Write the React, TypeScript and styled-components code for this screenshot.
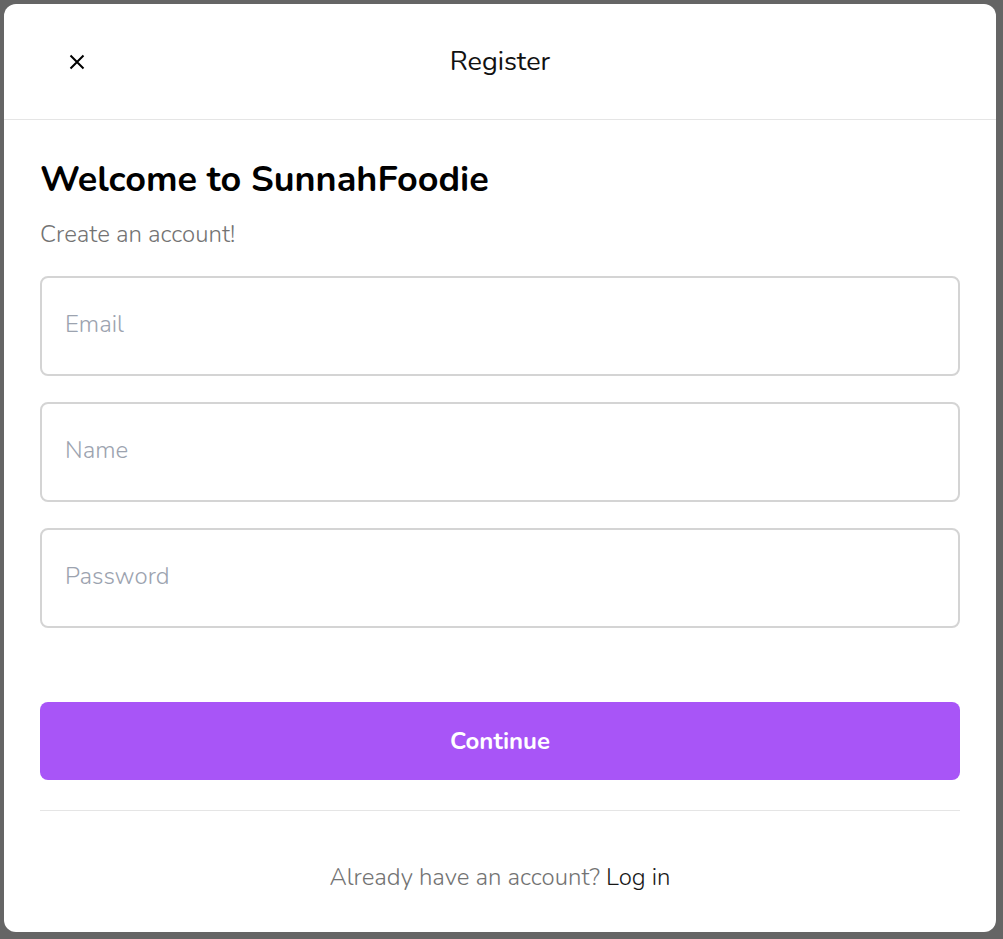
import React from "react";
import styled, { createGlobalStyle } from "styled-components";

const Global = createGlobalStyle`
  html, body { margin: 0; padding: 0; }
  body {
    background: #656565;
    font-family: "Nunito", "Lato", "Noto Sans", sans-serif;
  }
  * { box-sizing: border-box; }
`;

const Page = styled.div`
  padding: 4px 7px 7px 4px;
  height: 939px;
`;

const Modal = styled.div`
  background: #fff;
  border-radius: 12px;
  height: 928px;
  display: flex;
  flex-direction: column;
`;

const Header = styled.div`
  height: 116px;
  border-bottom: 1px solid #e5e5e5;
  display: flex;
  align-items: center;
  justify-content: center;
  position: relative;
`;

const CloseBtn = styled.button`
  position: absolute;
  left: 61px;
  top: 46px;
  width: 24px;
  height: 24px;
  border: none;
  background: none;
  padding: 0;
  display: flex;
  align-items: center;
  justify-content: center;
  cursor: pointer;
`;

const Title = styled.div`
  font-size: 27px;
  color: #111;
  line-height: 36px;
`;

const Body = styled.div`
  padding: 38px 36px 0 36px;
  display: flex;
  flex-direction: column;
`;

const Heading = styled.h1`
  margin: 0;
  font-size: 36px;
  font-weight: 700;
  color: #000;
  line-height: 44px;
`;

const Sub = styled.p`
  margin: 16px 0 0 0;
  font-size: 24px;
  font-weight: 300;
  color: #737373;
  line-height: 32px;
`;

const Fields = styled.div`
  display: flex;
  flex-direction: column;
  gap: 26px;
  margin-top: 26px;
`;

const Input = styled.input`
  height: 100px;
  width: 100%;
  border: 2px solid #d4d4d4;
  border-radius: 8px;
  padding: 0 23px 4px 23px;
  font-family: inherit;
  font-size: 24px;
  font-weight: 300;
  color: #111;
  outline: none;
  &::placeholder { color: #9ca3af; }
`;

const Button = styled.button`
  margin-top: 74px;
  height: 78px;
  width: 100%;
  background: #a855f7;
  border: none;
  border-radius: 8px;
  color: #fff;
  font-family: inherit;
  font-size: 24px;
  font-weight: 700;
  cursor: pointer;
`;

const Divider = styled.hr`
  margin: 30px 0 0 0;
  border: none;
  border-top: 1px solid #e5e5e5;
`;

const Footer = styled.div`
  margin-top: 50px;
  text-align: center;
  font-size: 24px;
  font-weight: 300;
  color: #737373;
`;

const Link = styled.span`
  color: #171717;
  cursor: pointer;
`;

export default function App() {
  return (
    <>
      <Global />
      <Page>
        <Modal>
          <Header>
            <CloseBtn aria-label="close">
              <svg width="18" height="18" viewBox="0 0 18 18" fill="none" stroke="#000" strokeWidth="2">
                <path d="M2.5 2.5 L15.5 15.5 M15.5 2.5 L2.5 15.5" />
              </svg>
            </CloseBtn>
            <Title>Register</Title>
          </Header>
          <Body>
            <Heading>Welcome to SunnahFoodie</Heading>
            <Sub>Create an account!</Sub>
            <Fields>
              <Input placeholder="Email" />
              <Input placeholder="Name" />
              <Input type="password" placeholder="Password" />
            </Fields>
            <Button>Continue</Button>
            <Divider />
            <Footer>
              Already have an account? <Link>Log in</Link>
            </Footer>
          </Body>
        </Modal>
      </Page>
    </>
  );
}
